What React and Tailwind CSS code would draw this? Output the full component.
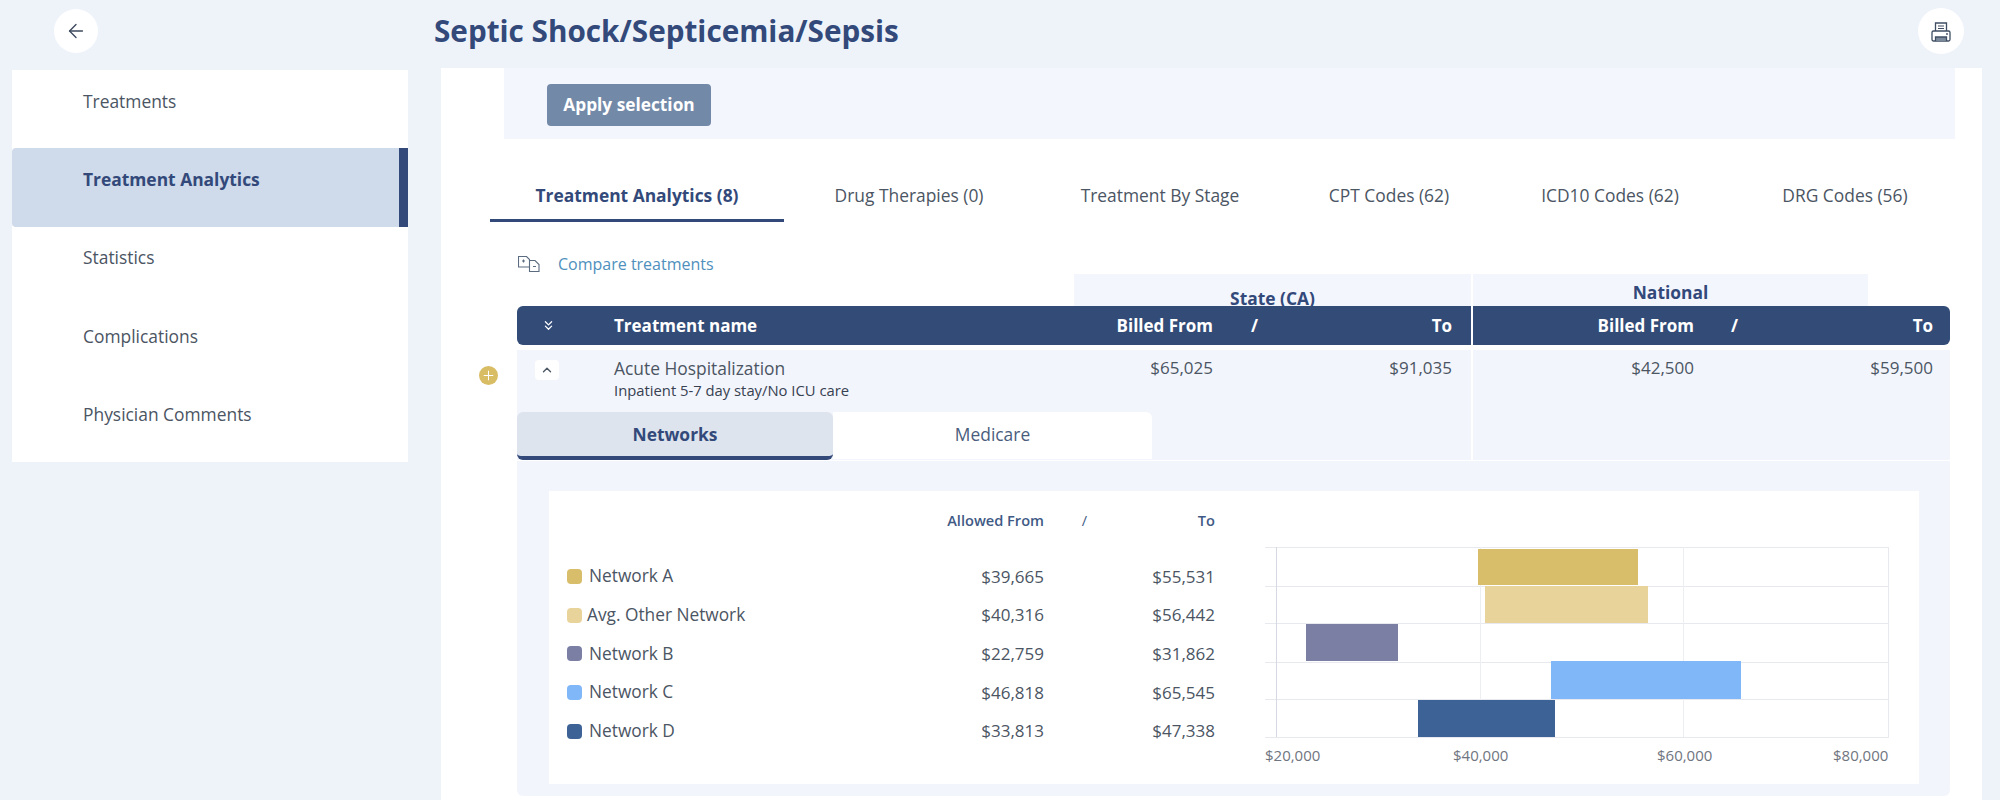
import React from 'react';
import { ArrowLeft, ChevronsDown, ChevronUp, Plus } from 'lucide-react';

const sideItems = ['Treatments', 'Treatment Analytics', 'Statistics', 'Complications', 'Physician Comments'];

const tabs = [
  { label: 'Treatment Analytics (8)', width: 'w-[294px]', active: true },
  { label: 'Drug Therapies (0)', width: 'w-[250px]' },
  { label: 'Treatment By Stage', width: 'w-[252px]' },
  { label: 'CPT Codes (62)', width: 'w-[206px]' },
  { label: 'ICD10 Codes (62)', width: 'w-[236px]' },
  { label: 'DRG Codes (56)', width: 'w-[234px]' },
];

const networks = [
  { name: 'Network A', from: '$39,665', to: '$55,531', swatch: 'bg-[#d8bd6a]', gap: 'pl-[7px]' },
  { name: 'Avg. Other Network', from: '$40,316', to: '$56,442', swatch: 'bg-[#e8d49b]', gap: 'pl-[5px]' },
  { name: 'Network B', from: '$22,759', to: '$31,862', swatch: 'bg-[#7b7fa3]', gap: 'pl-[7px]' },
  { name: 'Network C', from: '$46,818', to: '$65,545', swatch: 'bg-[#7fb7f8]', gap: 'pl-[7px]' },
  { name: 'Network D', from: '$33,813', to: '$47,338', swatch: 'bg-[#3d6396]', gap: 'pl-[7px]' },
];

const CompareIcon = () => (
  <svg width="22" height="16" viewBox="0 0 22 16" fill="none" stroke="#5b6b80" strokeWidth="1.1">
    <path d="M.5.500h8l3 3v7.500H.500z" />
    <path d="M12 4.500h5l4 4v7h-9.500V11" />
    <path d="M4 5h3M5.500 3.500v3M15 10.500h3" />
  </svg>
);

const PrinterIcon = () => (
  <svg width="20" height="20" viewBox="0 0 20 20" fill="none" stroke="#3f4d63" strokeWidth="1.3" className="mt-[2px]">
    <path d="M4.500 9V1h11v8" />
    <path d="M7 4h6M7 6.500h6" strokeWidth="1" />
    <rect x="1" y="9" width="18" height="10" rx="1.500" />
    <path d="M4.500 19v-4h11v4" fill="#7d8a9c" />
    <circle cx="16" cy="12" r="0.900" fill="#3f4d63" stroke="none" />
  </svg>
);

const RangeChart = () => {
  const rows = [547, 586, 623, 662, 699, 737];
  const bars = [
    { x: 218, y: 2, w: 160, h: 36, fill: '#d8bd6a' },
    { x: 225, y: 39, w: 163, h: 37, fill: '#e8d49b' },
    { x: 46, y: 77, w: 92, h: 37, fill: '#7b7fa3' },
    { x: 291, y: 114, w: 190, h: 38, fill: '#7fb7f8' },
    { x: 158, y: 153, w: 137, h: 37, fill: '#3d6396' },
  ];
  return (
    <svg width="640" height="230" viewBox="0 0 640 230" className="block">
      {rows.map((y) => (
        <line key={y} x1="5" x2="629" y1={y - 547 + 0.5} y2={y - 547 + 0.5} stroke="#e7e9ee" />
      ))}
      <line x1="16.500" x2="16.500" y1="0" y2="190" stroke="#d5d9e2" />
      <line x1="220.500" x2="220.500" y1="0" y2="190" stroke="#eceef2" />
      <line x1="423.500" x2="423.500" y1="0" y2="190" stroke="#eceef2" />
      <line x1="628.500" x2="628.500" y1="0" y2="190" stroke="#e7e9ee" />
      {bars.map((b) => (
        <rect key={b.fill} x={b.x} y={b.y} width={b.w} height={b.h} fill={b.fill} />
      ))}
      {[['$20,000', 5], ['$40,000', 193], ['$60,000', 397], ['$80,000', 573]].map(([t, x]) => (
        <text key={t} x={x} y="214" fontSize="15" fill="#6f7580" fontFamily="'Open Sans', sans-serif">{t}</text>
      ))}
    </svg>
  );
};

const App = () => {
  return (
    <div className="h-[800px] w-[2000px] overflow-hidden bg-[#eef3fa] font-['Open_Sans',sans-serif] text-[#4b5563]">
      {/* top bar */}
      <div className="flex h-[68px] items-center pb-[6px]">
        <div className="ml-[54px] flex h-11 w-11 items-center justify-center rounded-full bg-white">
          <ArrowLeft size={22} strokeWidth={1.5} color="#3c4a5e" />
        </div>
        <h1 className="ml-[336px] text-[29.700px] font-bold text-[#32497a]">Septic Shock/Septicemia/Sepsis</h1>
        <div className="ml-auto mr-[36px] flex h-[46px] w-[46px] items-center justify-center rounded-full bg-white">
          <PrinterIcon />
        </div>
      </div>

      <div className="flex pl-3">
        <aside className="mt-[2px] h-[392px] w-[396px] shrink-0 bg-white">
          {sideItems.map((item) =>
            item === 'Treatment Analytics' ? (
              <div key={item} className="flex h-[78.4px] items-center rounded-l-sm border-r-[9px] border-[#32497a] bg-[#cfdaea] pb-[18px] pl-[71px] text-[17.400px] font-bold text-[#32497a]">
                {item}
              </div>
            ) : (
              <div key={item} className="flex h-[78.4px] items-center pb-[17px] pl-[71px] text-[17.400px]">{item}</div>
            )
          )}
        </aside>

        <main className="ml-[33px] h-[732px] w-[1541px] shrink-0 bg-white">
          {/* filter panel */}
          <div className="ml-[63px] h-[71px] w-[1451px] bg-[#f3f6fd] pl-[43px] pt-4">
            <button className="h-[42px] w-[164px] rounded bg-[#7389a8] text-[17.300px] font-bold text-white">Apply selection</button>
          </div>

          {/* tabs */}
          <div className="ml-[49px] flex h-[83px]">
            {tabs.map((t) =>
              t.active ? (
                <div key={t.label} className={`${t.width} flex items-center justify-center border-b-[3px] border-[#32497a] pt-[32px] text-[17.400px] font-bold text-[#32497a]`}>
                  {t.label}
                </div>
              ) : (
                <div key={t.label} className={`${t.width} flex items-center justify-center pt-[29px] text-[17.400px]`}>
                  {t.label}
                </div>
              )
            )}
          </div>

          {/* compare link */}
          <div className="ml-[77px] flex h-[52px] items-center pt-[32px]">
            <CompareIcon />
            <span className="ml-[18px] text-[16px] text-[#4f90bd]">Compare treatments</span>
          </div>

          {/* State / National heading */}
          <div className="ml-[633px] flex h-[32px]">
            <div className="h-full w-[397px] overflow-hidden bg-[#f3f6fd] pt-[12px] text-center text-[17.400px] font-bold leading-[24px] text-[#32497a]">State (CA)</div>
            <div className="ml-[2px] h-full w-[395px] overflow-hidden bg-[#f3f6fd] pt-[6px] text-center text-[17.400px] font-bold leading-[24px] text-[#32497a]">National</div>
          </div>

          {/* table head */}
          <div className="ml-[76px] flex h-[39px] w-[1433px] items-center rounded-md bg-[#324b77] text-[17px] font-bold text-white">
            <div className="flex w-[97px] shrink-0 justify-center pr-[34px]">
              <ChevronsDown size={15} strokeWidth={2} />
            </div>
            <div className="w-[360px] shrink-0">Treatment name</div>
            <div className="w-[239px] shrink-0 text-right">Billed From</div>
            <div className="w-[45px] shrink-0 text-right">/</div>
            <div className="w-[194px] shrink-0 text-right">To</div>
            <div className="ml-[19px] h-full w-[2px] shrink-0 bg-white" />
            <div className="w-[221px] shrink-0 text-right">Billed From</div>
            <div className="w-[44px] shrink-0 text-right">/</div>
            <div className="w-[195px] shrink-0 text-right">To</div>
          </div>

          {/* treatment row */}
          <div className="relative ml-[76px] mt-[5px] flex h-[110px] w-[1433px] bg-[#f3f5fc]">
            <div className="absolute left-[-38px] top-[16px] flex h-[19px] w-[19px] items-center justify-center rounded-full bg-[#d9bd65]">
              <Plus size={15} strokeWidth={1.6} color="#fff" />
            </div>
            <div className="flex w-[954px] shrink-0 flex-col">
              <div className="flex h-[62px]">
                <div className="w-[97px] shrink-0 pl-[18px] pt-[10px]">
                  <div className="flex h-5 w-[24px] items-center justify-center rounded-sm bg-white">
                    <ChevronUp size={14} strokeWidth={2.4} color="#4b5563" />
                  </div>
                </div>
                <div className="w-[360px] shrink-0 pt-[6px]">
                  <div className="text-[17.400px] leading-6">Acute Hospitalization</div>
                  <div className="text-[14.800px] leading-5 text-[#374151]">Inpatient 5-7 day stay/No ICU care</div>
                </div>
                <div className="w-[239px] shrink-0 pt-[6px] text-right text-[17px] leading-6">$65,025</div>
                <div className="w-[239px] shrink-0 pt-[6px] text-right text-[17px] leading-6">$91,035</div>
              </div>
              <div className="flex h-[48px]">
                <div className="flex w-[316px] items-center justify-center rounded-t-md rounded-b-md border-b-[4px] border-[#32497a] bg-[#dde4ee] text-[17.400px] font-bold text-[#32497a]">Networks</div>
                <div className="mb-[1px] flex w-[319px] items-center justify-center rounded-tr-md bg-white pb-[3px] text-[17.400px] text-[#4a5d7d]">Medicare</div>
              </div>
            </div>
            <div className="w-[2px] shrink-0 bg-white" />
            <div className="w-[221px] shrink-0 pt-[6px] text-right text-[17px] leading-6">$42,500</div>
            <div className="w-[239px] shrink-0 pt-[6px] text-right text-[17px] leading-6">$59,500</div>
          </div>

          {/* expanded detail */}
          <div className="ml-[76px] mt-[1px] h-[335px] w-[1433px] rounded-b-md bg-[#f3f5fc] px-[32px] pt-[30px]">
            <div className="flex h-[293px] w-[1370px] bg-white">
              <div className="w-[711px] shrink-0 pl-[18px]">
                <div className="flex h-[66px] items-start pt-[19px] text-[14.600px] font-semibold leading-5 text-[#3f5a85]">
                  <div className="w-[477px] shrink-0 text-right">Allowed From</div>
                  <div className="w-[43px] shrink-0 text-right font-normal">/</div>
                  <div className="w-[128px] shrink-0 text-right">To</div>
                </div>
                {networks.map((n) => (
                  <div key={n.name} className="flex h-[38.700px] items-center text-[17.300px]">
                    <div className={`h-[15px] w-[15px] shrink-0 rounded-sm ${n.swatch}`} />
                    <div className={`w-[337px] shrink-0 ${n.gap}`}>{n.name}</div>
                    <div className="w-[125px] shrink-0 text-right text-[17px]">{n.from}</div>
                    <div className="w-[171px] shrink-0 text-right text-[17px]">{n.to}</div>
                  </div>
                ))}
              </div>
              <div className="pt-[56px]">
                <RangeChart />
              </div>
            </div>
          </div>
        </main>
      </div>
    </div>
  );
};

export default App;
